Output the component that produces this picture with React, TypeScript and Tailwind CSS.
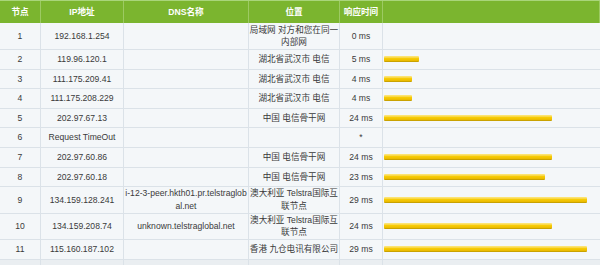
import React from "react";

type Hop = {
    node: string;
    ip: string;
    dns: React.ReactNode;
    place: React.ReactNode;
    time: string;
    ms: number;
    tall?: boolean;
};

const hops: Hop[] = [
    { node: "1", ip: "192.168.1.254", dns: "", place: <>局域网 对方和您在同一<br />内部网</>, time: "0 ms", ms: 0, tall: true },
    { node: "2", ip: "119.96.120.1", dns: "", place: "湖北省武汉市 电信", time: "5 ms", ms: 5 },
    { node: "3", ip: "111.175.209.41", dns: "", place: "湖北省武汉市 电信", time: "4 ms", ms: 4 },
    { node: "4", ip: "111.175.208.229", dns: "", place: "湖北省武汉市 电信", time: "4 ms", ms: 4 },
    { node: "5", ip: "202.97.67.13", dns: "", place: "中国 电信骨干网", time: "24 ms", ms: 24 },
    { node: "6", ip: "Request TimeOut", dns: "", place: "", time: "*", ms: 0 },
    { node: "7", ip: "202.97.60.86", dns: "", place: "中国 电信骨干网", time: "24 ms", ms: 24 },
    { node: "8", ip: "202.97.60.18", dns: "", place: "中国 电信骨干网", time: "23 ms", ms: 23 },
    { node: "9", ip: "134.159.128.241", dns: <>i-12-3-peer.hkth01.pr.telstraglob<br />al.net</>, place: <>澳大利亚 Telstra国际互<br />联节点</>, time: "29 ms", ms: 29, tall: true },
    { node: "10", ip: "134.159.208.74", dns: "unknown.telstraglobal.net", place: <>澳大利亚 Telstra国际互<br />联节点</>, time: "24 ms", ms: 24, tall: true },
    { node: "11", ip: "115.160.187.102", dns: "", place: "香港 九仓电讯有限公司", time: "29 ms", ms: 29 },
];

const cols = "grid grid-cols-[41px_83px_125px_91px_43px_1fr]";
const cell = "flex items-center justify-center text-center border-r border-[#dbe2e8] leading-[12.5px] overflow-hidden whitespace-nowrap";

const App = () => {
    return (
        <div
            className="w-[600px] h-[265px] overflow-hidden bg-[#f4f7f9] text-[#3a3a3a] text-[8.6px]"
            style={{ fontFamily: '"Liberation Sans", Tahoma, "Noto Sans CJK SC", sans-serif' }}
        >
            <div className={`${cols} h-[23px] bg-[#7bb52f] border-t border-[#a9d57a] text-white font-bold`}>
                {["节点", "IP地址", "DNS名称", "位置", "响应时间", ""].map((h, i) => (
                    <div key={i} className="flex items-center justify-center border-r border-[#9dca63]">
                        {h}
                    </div>
                ))}
            </div>

            {hops.map((hop) => (
                <div
                    key={hop.node}
                    className={`${cols} border-b border-[#dbe2e8] ${hop.node === "1" ? "h-[27px]" : hop.tall ? "h-[26.5px]" : "h-[19.6px]"}`}
                >
                    <div className={cell}>{hop.node}</div>
                    <div className={cell}>{hop.ip}</div>
                    <div className={cell}>{hop.dns}</div>
                    <div className={cell}>{hop.place}</div>
                    <div className={cell}>{hop.time}</div>
                    <div className="flex items-center pl-[1px]">
                        {hop.ms > 0 && (
                            <div
                                className="h-[6px] rounded-[1px] border-b border-[#c9a200] bg-linear-to-b from-[#fdea80] via-[#f7cc05] to-[#e9b800]"
                                style={{ width: hop.ms * 7 }}
                            />
                        )}
                    </div>
                </div>
            ))}

            <div className={`${cols} h-[20px] bg-[#eaeef1]`}>
                <div className={cell} />
                <div className={cell} />
                <div className={cell} />
                <div className={cell} />
                <div className={cell} />
                <div />
            </div>
        </div>
    );
};

export default App;
